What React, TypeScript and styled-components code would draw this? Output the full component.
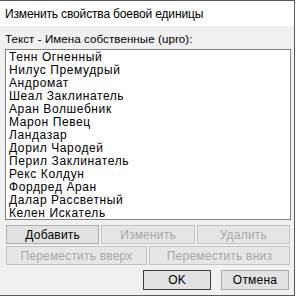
import React from 'react';
import styled, { createGlobalStyle } from 'styled-components';

const GlobalStyle = createGlobalStyle`
  html, body {
    margin: 0;
    padding: 0;
    background: #ffffff;
  }
`;

const Window = styled.div`
  width: 295px;
  height: 296px;
  display: flex;
  flex-direction: column;
  background: #f0f0f0;
  border-right: 1px solid #5a5a5a;
  border-bottom: 1px solid #5a5a5a;
  border-top: 1px solid #5a5a5a;
  box-sizing: border-box;
  font-family: "Liberation Sans", Arial, sans-serif;
  font-size: 12px;
  color: #000;
`;

const TitleBar = styled.div`
  height: 25px;
  background: #ffffff;
  display: flex;
  align-items: center;
  padding-left: 5px;
  font-family: "Liberation Sans", Arial, sans-serif;
  font-size: 12px;
  letter-spacing: -0.15px;
  color: #000;
`;

const Body = styled.div`
  flex: 1;
  display: flex;
  flex-direction: column;
  padding: 5px 3px 0 5px;
`;

const Caption = styled.div`
  height: 16px;
  line-height: 16px;
  margin-bottom: 2px;
  font-size: 11.5px;
  letter-spacing: 0.1px;
`;

const ListBox = styled.div`
  height: 171px;
  background: #ffffff;
  border: 1px solid #828282;
  box-sizing: border-box;
  padding-top: 1px;
  overflow: hidden;
`;

const Item = styled.div`
  height: 13px;
  line-height: 13px;
  padding-left: 3px;
  white-space: nowrap;
  letter-spacing: 0.6px;
`;

const ButtonRow = styled.div<{ $cols: number; $top: number }>`
  display: grid;
  grid-template-columns: repeat(${p => p.$cols}, 1fr);
  gap: 2px;
  margin-top: ${p => p.$top}px;
  padding: 0 1px 0 1px;
`;

const Btn = styled.button<{ $primary?: boolean }>`
  height: 19px;
  margin: 0;
  padding: 0;
  font-family: "Liberation Sans", Arial, sans-serif;
  font-size: 12px;
  letter-spacing: 0.2px;
  background: ${p => (p.disabled ? '#e6e6e6' : '#e1e1e1')};
  border: 1px solid ${p => (p.$primary ? '#3c3c3c' : p.disabled ? '#c4c4c4' : '#adadad')};
  color: ${p => (p.disabled ? '#a6a6a6' : '#000')};
  box-sizing: border-box;
`;

const Footer = styled.div`
  display: flex;
  justify-content: flex-end;
  gap: 10px;
  margin-top: 5px;
  padding-right: 2px;
`;

const FooterBtn = styled(Btn)`
  width: 68px;
  height: 20px;
`;

const names = [
  'Тенн Огненный',
  'Нилус Премудрый',
  'Андромат',
  'Шеал Заклинатель',
  'Аран Волшебник',
  'Марон Певец',
  'Ландазар',
  'Дорил Чародей',
  'Перил Заклинатель',
  'Рекс Колдун',
  'Фордред Аран',
  'Далар Рассветный',
  'Келен Искатель',
];

export default function App() {
  return (
    <>
      <GlobalStyle />
      <Window>
        <TitleBar>Изменить свойства боевой единицы</TitleBar>
        <Body>
          <Caption>Текст - Имена собственные (upro):</Caption>
          <ListBox>
            {names.map(n => (
              <Item key={n}>{n}</Item>
            ))}
          </ListBox>
          <ButtonRow $cols={3} $top={5}>
            <Btn>Добавить</Btn>
            <Btn disabled>Изменить</Btn>
            <Btn disabled>Удалить</Btn>
          </ButtonRow>
          <ButtonRow $cols={2} $top={2}>
            <Btn disabled>Переместить вверх</Btn>
            <Btn disabled>Переместить вниз</Btn>
          </ButtonRow>
          <Footer>
            <FooterBtn $primary>OK</FooterBtn>
            <FooterBtn>Отмена</FooterBtn>
          </Footer>
        </Body>
      </Window>
    </>
  );
}
